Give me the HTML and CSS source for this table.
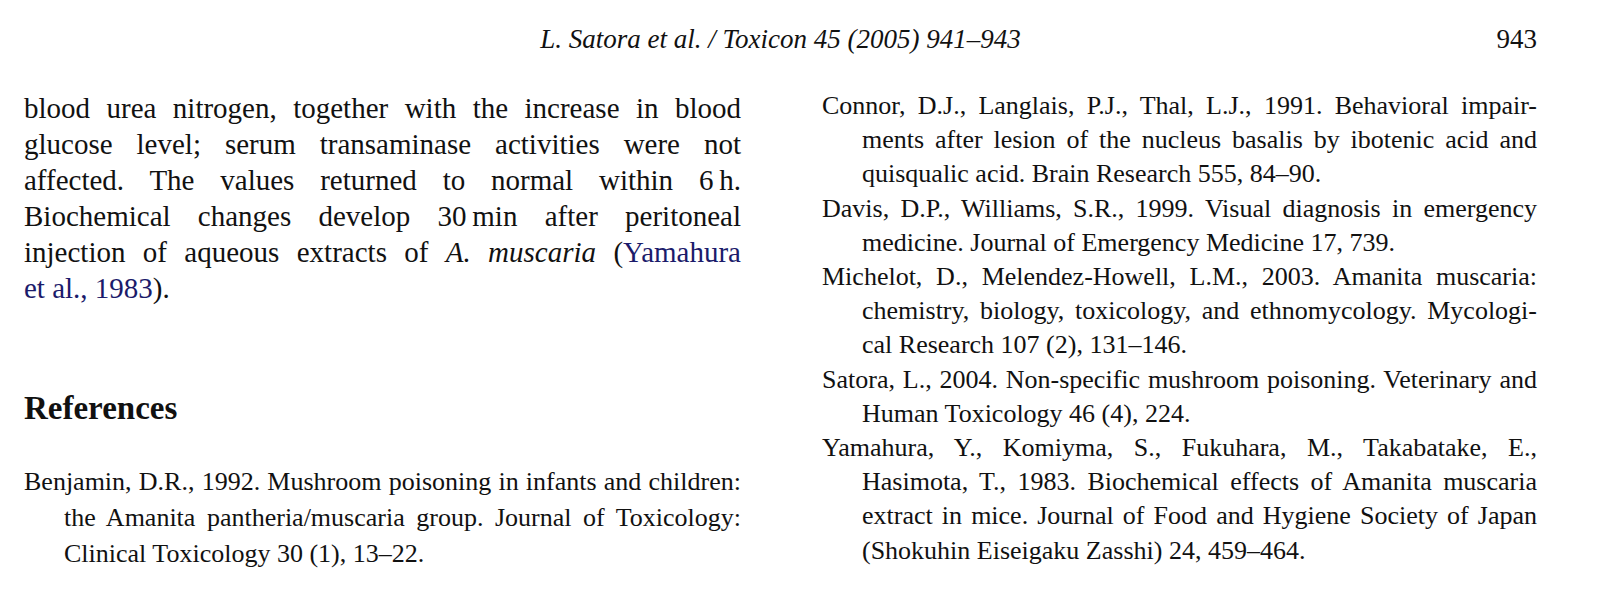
FILE: index.html
```html
<!DOCTYPE html>
<html lang="en">
<head>
<meta charset="utf-8">
<title>L. Satora et al. / Toxicon 45 (2005) 941–943</title>
<link rel="stylesheet" href="styles.css">
</head>
<body>
<div class="page">
  <header class="running-head">
    <span class="spacer"></span>
    <span class="journal">L. Satora et al. / Toxicon 45 (2005) 941–943</span>
    <span class="folio">943</span>
  </header>
  <div class="columns">
    <div class="col col-left">
      <p class="body-text">
        <span class="ln">blood urea nitrogen, together with the increase in blood</span>
        <span class="ln">glucose level; serum transaminase activities were not</span>
        <span class="ln">affected. The values returned to normal within 6&thinsp;h.</span>
        <span class="ln">Biochemical changes develop 30&thinsp;min after peritoneal</span>
        <span class="ln">injection of aqueous extracts of <i>A. muscaria</i> (<a class="cite">Yamahura</a></span>
        <span class="ln end"><a class="cite">et al., 1983</a>).</span>
      </p>
      <h2 class="refs-title">References</h2>
      <div class="refs">
        <div class="ref">
          <span class="ln">Benjamin, D.R., 1992. Mushroom poisoning in infants and children:</span>
          <span class="ln">the Amanita pantheria/muscaria group. Journal of Toxicology:</span>
          <span class="ln end">Clinical Toxicology 30 (1), 13–22.</span>
        </div>
      </div>
    </div>
    <div class="col col-right">
      <div class="refs">
        <div class="ref">
          <span class="ln">Connor, D.J., Langlais, P.J., Thal, L.J., 1991. Behavioral impair-</span>
          <span class="ln">ments after lesion of the nucleus basalis by ibotenic acid and</span>
          <span class="ln end">quisqualic acid. Brain Research 555, 84–90.</span>
        </div>
        <div class="ref">
          <span class="ln">Davis, D.P., Williams, S.R., 1999. Visual diagnosis in emergency</span>
          <span class="ln end">medicine. Journal of Emergency Medicine 17, 739.</span>
        </div>
        <div class="ref">
          <span class="ln">Michelot, D., Melendez-Howell, L.M., 2003. Amanita muscaria:</span>
          <span class="ln">chemistry, biology, toxicology, and ethnomycology. Mycologi-</span>
          <span class="ln end">cal Research 107 (2), 131–146.</span>
        </div>
        <div class="ref">
          <span class="ln">Satora, L., 2004. Non-specific mushroom poisoning. Veterinary and</span>
          <span class="ln end">Human Toxicology 46 (4), 224.</span>
        </div>
        <div class="ref">
          <span class="ln">Yamahura, Y., Komiyma, S., Fukuhara, M., Takabatake, E.,</span>
          <span class="ln">Hasimota, T., 1983. Biochemical effects of Amanita muscaria</span>
          <span class="ln">extract in mice. Journal of Food and Hygiene Society of Japan</span>
          <span class="ln end">(Shokuhin Eiseigaku Zasshi) 24, 459–464.</span>
        </div>
      </div>
    </div>
  </div>
</div>
</body>
</html>
```

FILE: styles.css
```css
html, body {
  margin: 0;
  padding: 0;
  background: #ffffff;
}

body {
  font-family: "Liberation Serif", "Times New Roman", serif;
  color: #111111;
}

.page {
  width: 1513px;
  padding: 22px 61px 0 24px;
}

.running-head {
  display: grid;
  grid-template-columns: 1fr auto 1fr;
  font-size: 27px;
  line-height: 34px;
  height: 34px;
}

.journal {
  font-style: italic;
}

.folio {
  justify-self: end;
}

.columns {
  display: grid;
  grid-template-columns: 717px 715px;
  column-gap: 81px;
  margin-top: 33px;
}

.ln {
  display: block;
  white-space: nowrap;
  text-align: justify;
  text-align-last: justify;
}

.ln.end {
  text-align: left;
  text-align-last: left;
}

.body-text {
  margin: 0;
  padding-top: 1px;
  font-size: 29px;
  line-height: 36px;
}

.cite {
  color: #1b1b6b;
  text-decoration: none;
}

.refs-title {
  margin: 82px 0 0 0;
  font-size: 33px;
  line-height: 40px;
  font-weight: bold;
}

.refs {
  font-size: 26px;
  line-height: 34.2px;
}

.col-left .refs {
  margin-top: 36px;
  line-height: 36px;
}

.ref {
  padding-left: 40px;
}

.ref .ln:first-child {
  margin-left: -40px;
}
```
